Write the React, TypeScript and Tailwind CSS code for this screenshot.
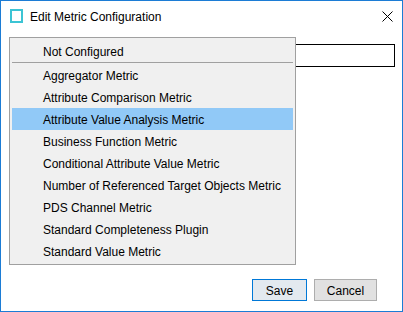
import React from "react";

const items = [
  "Aggregator Metric",
  "Attribute Comparison Metric",
  "Attribute Value Analysis Metric",
  "Business Function Metric",
  "Conditional Attribute Value Metric",
  "Number of Referenced Target Objects Metric",
  "PDS Channel Metric",
  "Standard Completeness Plugin",
  "Standard Value Metric",
];

export default function App() {
  return (
    <div
      className="relative w-[403px] h-[312px] border border-[#1c7cd5] bg-white flex flex-col text-[12px] text-black"
      style={{ fontFamily: '"Liberation Sans", Arial, sans-serif' }}
    >
      {/* Title bar */}
      <div className="h-[30px] flex items-center shrink-0">
        <div className="ml-[9px] w-[13px] h-[14px] border-2 border-[#3cc4d4]" />
        <div className="ml-[7px] leading-none pt-[1px]">Edit Metric Configuration</div>
        <div className="ml-auto mr-[9px] w-[11px] h-[11px]">
          <svg width="11" height="11" viewBox="0 0 11 11">
            <path d="M0.5 0.5 L10.5 10.5 M10.5 0.5 L0.5 10.5" stroke="#000" strokeWidth="1" fill="none" />
          </svg>
        </div>
      </div>

      {/* Body */}
      <div className="flex-1 flex flex-col">
        <div className="mt-[13px] ml-[8px] mr-[7px] h-[23px] border border-black" />
        <div className="flex-1" />
        <div className="flex justify-end gap-[7px] pr-[25px] pb-[10px]">
          <button className="w-[55px] h-[22px] border border-[#0078d7] bg-[#e3e9ef] flex items-center justify-center leading-none pt-[1px]">
            Save
          </button>
          <button className="w-[63px] h-[22px] border border-[#adadad] bg-[#e1e1e1] flex items-center justify-center leading-none pt-[1px]">
            Cancel
          </button>
        </div>
      </div>

      {/* Dropdown popup */}
      <div className="absolute left-[8px] top-[36px] w-[287px] h-[228px] border border-[#a0a0a0] bg-[#f0f0f0] p-[2px] flex flex-col">
        <div className="h-[22px] flex items-center pl-[31px] pt-[2px]">Not Configured</div>
        <div className="h-[1px] bg-[#a0a0a0]" />
        <div className="h-[1px]" />
        {items.map((it) => (
          <div
            key={it}
            className={
              it === "Attribute Value Analysis Metric"
                ? "h-[22px] flex items-center pl-[31px] pt-[2px] bg-[#91c9f7]"
                : "h-[22px] flex items-center pl-[31px] pt-[2px]"
            }
          >
            {it}
          </div>
        ))}
      </div>
    </div>
  );
}
